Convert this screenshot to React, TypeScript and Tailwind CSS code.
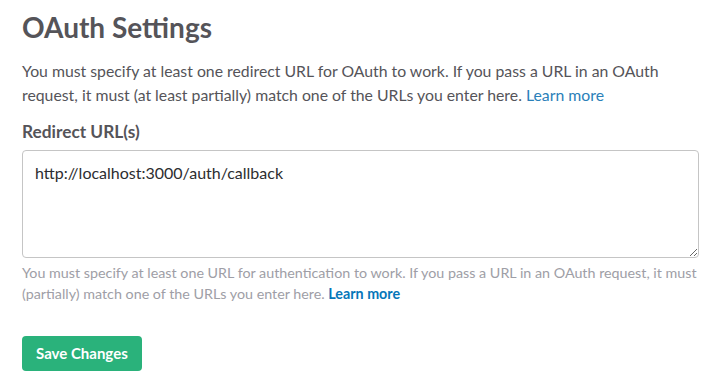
import React from "react";

export default function App() {
  return (
    <div className="w-[724px] h-[389px] bg-white px-[22px] pt-[9px] overflow-hidden" style={{ fontFamily: "Lato, 'Noto Sans', sans-serif" }}>
      <h1 className="text-[28px] leading-[36px] font-bold text-[#555459] m-0">OAuth Settings</h1>
      <p className="mt-[14px] text-[15.8px] leading-[24px] text-[#555459]">
        You must specify at least one redirect URL for OAuth to work. If you pass a URL in an OAuth request, it must (at least partially) match one of the URLs you enter here.{" "}
        <a className="text-[#2a80b9]" href="#">Learn more</a>
      </p>
      <label className="block mt-[14px] text-[17.3px] leading-[22px] font-bold text-[#555459]">Redirect URL(s)</label>
      <textarea
        className="block mt-[7px] w-[677px] h-[108px] border border-[#c5c5c5] rounded-[4px] px-[12px] pt-[11px] pb-[8px] text-[16px] leading-[22px] text-[#2c2d30] outline-none"
        style={{ fontFamily: "Lato, 'Noto Sans', sans-serif" }}
        defaultValue="http://localhost:3000/auth/callback"
      />
      <p className="mt-[4px] text-[14.3px] leading-[21px] text-[#9e9ea6]">
        You must specify at least one URL for authentication to work. If you pass a URL in an OAuth request, it must (partially) match one of the URLs you enter here.{" "}
        <a className="text-[#0576b9] font-bold" href="#">Learn more</a>
      </p>
      <button className="mt-[32px] h-[35px] px-[14px] rounded-[4px] bg-[#2ab27b] text-white text-[15px] font-bold">
        Save Changes
      </button>
    </div>
  );
}
